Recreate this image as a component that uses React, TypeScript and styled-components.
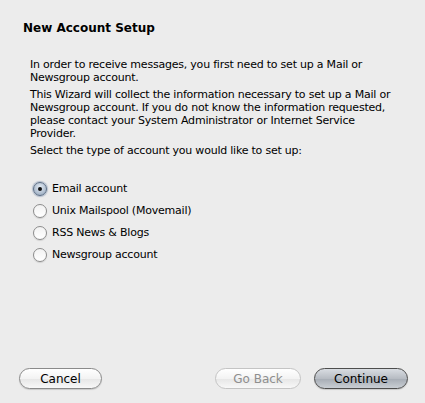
import { useState } from 'react'
import styled, { createGlobalStyle } from 'styled-components'

const GlobalStyle = createGlobalStyle`
  html, body {
    margin: 0;
    padding: 0;
    background: #ececec;
  }
`

const ACCOUNT_TYPES = [
  'Email account',
  'Unix Mailspool (Movemail)',
  'RSS News & Blogs',
  'Newsgroup account',
]

const App = () => {
  const [selected, setSelected] = useState(0)
  return <Window>
    <GlobalStyle/>
    <Title>New Account Setup</Title>
    <Body>
      <Para>In order to receive messages, you first need to set up a Mail or Newsgroup account.</Para>
      <Para>This Wizard will collect the information necessary to set up a Mail or Newsgroup account. If you do not know the information requested, please contact your System Administrator or Internet Service Provider.</Para>
      <Para>Select the type of account you would like to set up:</Para>
      <RadioList>
        {ACCOUNT_TYPES.map((label, i) => (
          <RadioRow key={label} onClick={() => setSelected(i)}>
            <Radio $checked={selected === i}/>
            <span>{label}</span>
          </RadioRow>
        ))}
      </RadioList>
    </Body>
    <Footer>
      <Button $width={83}>Cancel</Button>
      <Spacer/>
      <Button $width={86} disabled>Go Back</Button>
      <Button $width={94} $primary>Continue</Button>
    </Footer>
  </Window>
}

const Window = styled.div`
  height: 403px;
  display: flex;
  flex-direction: column;
  box-sizing: border-box;
  padding: 20px 17px 14px 19px;
  font-family: "DejaVu Sans", Verdana, sans-serif;
  font-size: 11px;
  color: #000;
`
const Title = styled.div`
  font-weight: bold;
  font-size: 12px;
  padding-left: 4px;
  line-height: 16px;
`
const Body = styled.div`
  flex: 1;
  padding: 22px 0 0 11px;
  letter-spacing: -0.22px;
`
const Para = styled.p`
  margin: 0 0 4px;
  max-width: 362px;
  line-height: 13px;
`
const RadioList = styled.div`
  margin-top: 24px;
  display: flex;
  flex-direction: column;
  gap: 7px;
`
const RadioRow = styled.label`
  display: flex;
  align-items: center;
  gap: 5px;
  height: 15px;
  padding-left: 3px;
  cursor: default;
`
const Radio = styled.span<{ $checked: boolean }>`
  width: 14px;
  height: 14px;
  border-radius: 50%;
  box-sizing: border-box;
  position: relative;
  border: 1px solid ${p => (p.$checked ? '#5d6f86' : '#8c8c8c')};
  background: ${p => (p.$checked
    ? 'radial-gradient(circle at 50% 35%, #e4ecf5 0%, #a9b8ca 70%, #8fa1b8 100%)'
    : 'linear-gradient(#f2f2f2, #ffffff)')};
  box-shadow: ${p => (p.$checked ? '0 0 1px 1px rgba(120,140,170,0.5)' : '0 1px 1px rgba(0,0,0,0.12)')};
  &::after {
    content: '';
    display: ${p => (p.$checked ? 'block' : 'none')};
    position: absolute;
    left: 4px;
    top: 4px;
    width: 4px;
    height: 4px;
    border-radius: 50%;
    background: #111;
  }
`
const Footer = styled.div`
  display: flex;
  align-items: center;
  gap: 13px;
`
const Spacer = styled.div`
  flex: 1;
`
const Button = styled.button<{ $primary?: boolean; $width: number }>`
  font-family: "DejaVu Sans", Verdana, sans-serif;
  font-size: 12px;
  height: 21px;
  width: ${p => p.$width}px;
  padding: 0;
  border-radius: 11px;
  color: #000;
  border: 1px solid ${p => (p.$primary ? '#4d4d4d' : '#8a8a8a')};
  background: ${p => (p.$primary
    ? 'linear-gradient(#d9dde2 0%, #b7bcc3 50%, #a6acb4 51%, #c9ced4 100%)'
    : 'linear-gradient(#ffffff 0%, #f3f3f3 50%, #e6e6e6 51%, #f8f8f8 100%)')};
  box-shadow: 0 1px 1px rgba(0,0,0,0.15);
  &:disabled {
    color: #8e8e8e;
    border-color: #c4c4c4;
    box-shadow: none;
  }
`

export default App
